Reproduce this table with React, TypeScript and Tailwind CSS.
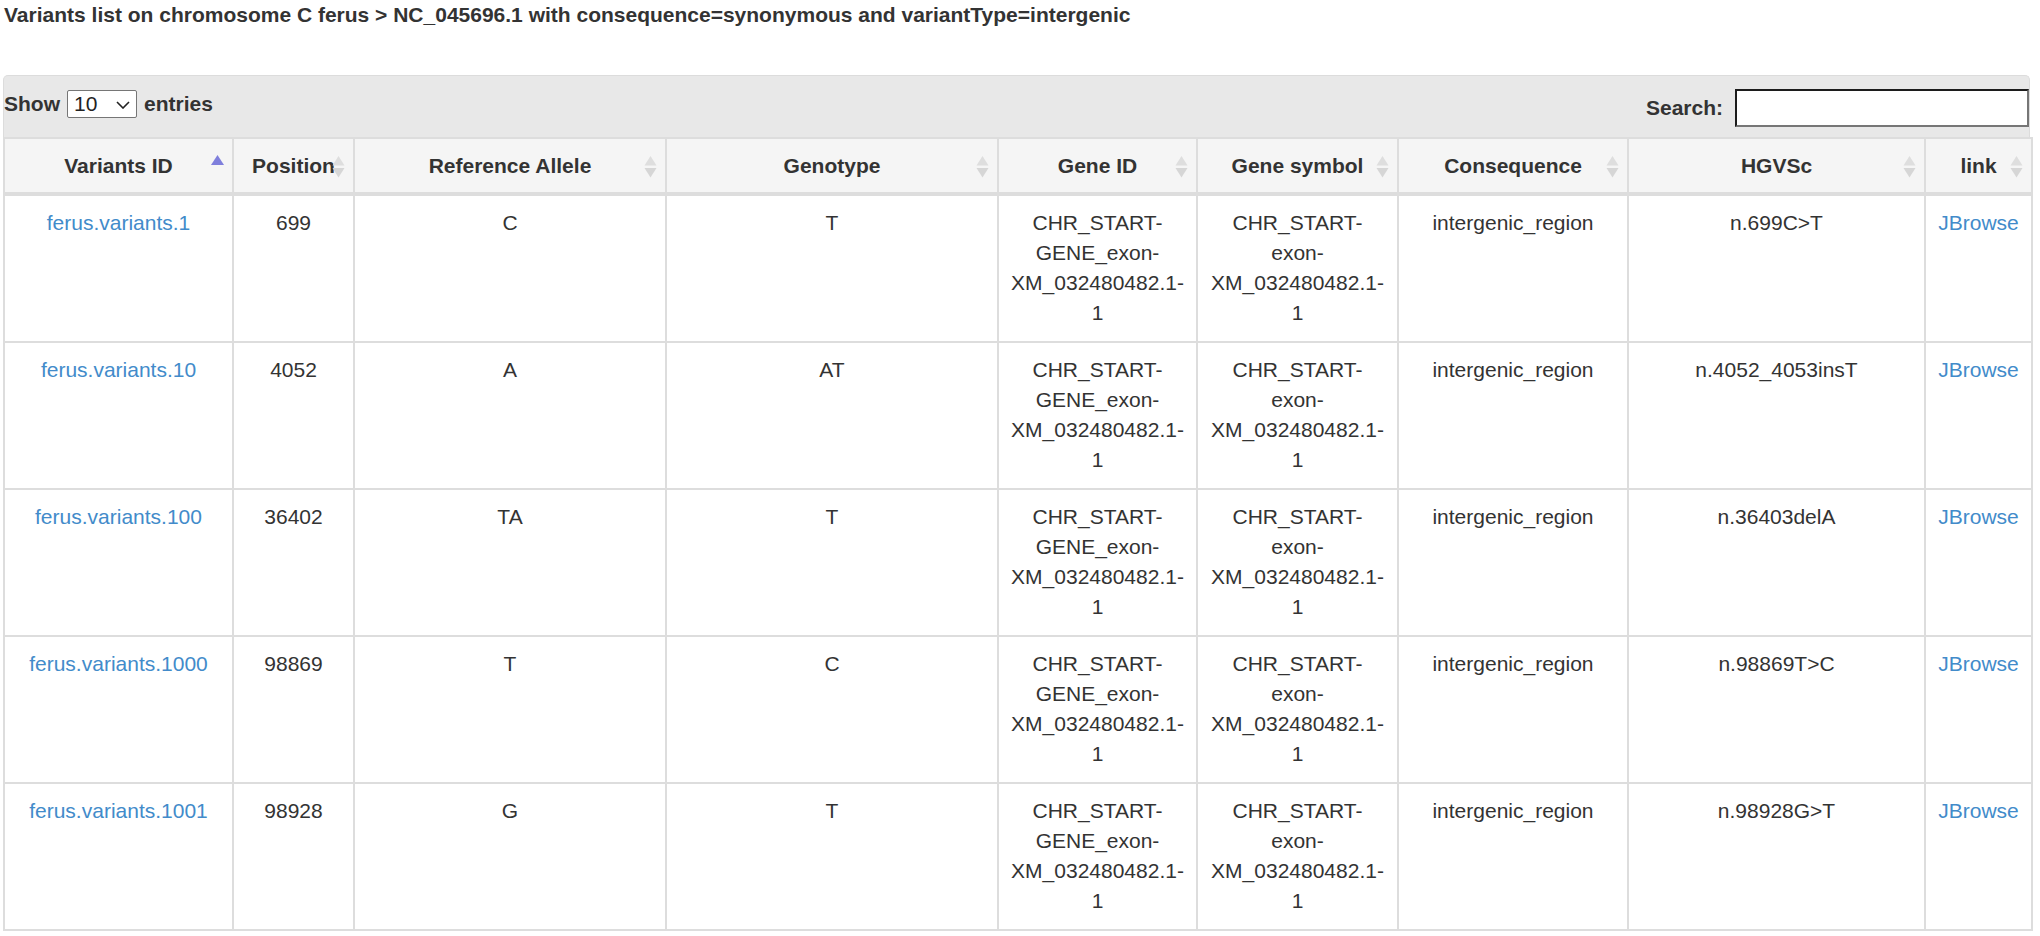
import { useState } from "react";

type Sort = "asc" | "both";

const columns: { label: string; sort: Sort }[] = [
  { label: "Variants ID", sort: "asc" },
  { label: "Position", sort: "both" },
  { label: "Reference Allele", sort: "both" },
  { label: "Genotype", sort: "both" },
  { label: "Gene ID", sort: "both" },
  { label: "Gene symbol", sort: "both" },
  { label: "Consequence", sort: "both" },
  { label: "HGVSc", sort: "both" },
  { label: "link", sort: "both" },
];

const GENE_ID = "CHR_START-GENE_exon-XM_032480482.1-1";
const GENE_SYMBOL = "CHR_START-exon-XM_032480482.1-1";

const rows = [
  { id: "ferus.variants.1", pos: "699", ref: "C", gt: "T", hgvs: "n.699C>T" },
  { id: "ferus.variants.10", pos: "4052", ref: "A", gt: "AT", hgvs: "n.4052_4053insT" },
  { id: "ferus.variants.100", pos: "36402", ref: "TA", gt: "T", hgvs: "n.36403delA" },
  { id: "ferus.variants.1000", pos: "98869", ref: "T", gt: "C", hgvs: "n.98869T>C" },
  { id: "ferus.variants.1001", pos: "98928", ref: "G", gt: "T", hgvs: "n.98928G>T" },
];

function SortIcon({ sort }: { sort: Sort }) {
  return (
    <svg
      width="13"
      height="24"
      viewBox="0 0 13 24"
      className="absolute right-[8px] top-[16px]"
    >
      {sort === "asc" ? (
        <path d="M6.5 0 L13 10 H0 Z" fill="#7f7fdc" />
      ) : (
        <>
          <path d="M6.5 1 L12.5 10.5 H0.5 Z" fill="#dedede" />
          <path d="M0.5 13 H12.5 L6.5 22.5 Z" fill="#d6d6d6" />
        </>
      )}
    </svg>
  );
}

const cell = "border-r-2 border-b-2 border-[#ddd] px-[10px] pt-[12px] pb-[13px] text-center";

export default function App() {
  const [search, setSearch] = useState("");

  return (
    <div className="min-h-screen bg-white px-[3px] font-['Liberation_Sans',Arial,sans-serif] text-[21px] leading-[30px] text-[#333]">
      <h1 className="mb-[45px] pl-[1px] font-bold">
        Variants list on chromosome C ferus &gt; NC_045696.1 with consequence=synonymous and
        variantType=intergenic
      </h1>

      {/* toolbar */}
      <div className="flex h-[62px] w-[2027px] items-start justify-between rounded-t-[5px] border border-b-0 border-[#dcdcdc] bg-[#e8e8e8] pt-[13px]">
        <label className="flex items-center font-bold">
          Show
          <span className="relative mx-[7px] flex h-[28px] w-[70px] items-center rounded-[2px] border border-[#767676] bg-white pl-[6px] font-normal text-[#222]">
            10
            <svg
              width="14"
              height="8"
              viewBox="0 0 14 8"
              className="absolute right-[6px] top-[10px]"
            >
              <path d="M1 1 L7 7 L13 1" fill="none" stroke="#222" strokeWidth="1.6" />
            </svg>
          </span>
          entries
        </label>
        <label className="flex items-center font-bold">
          Search:
          <input
            value={search}
            onChange={(e) => setSearch(e.target.value)}
            className="ml-[12px] h-[38px] w-[294px] border-2 border-t-[#1c1c1c] border-l-[#1c1c1c] border-r-[#767676] border-b-[#767676] bg-white px-[4px] font-normal outline-none"
          />
        </label>
      </div>

      {/* table */}
      <div className="grid w-fit grid-cols-[229px_121px_312px_332px_199px_201px_230px_297px_107px] border-l-2 border-[#ddd]">
        {columns.map((c) => (
          <div
            key={c.label}
            className="relative border-t-2 border-r-2 border-b-[4px] border-[#ddd] bg-[#f5f5f5] px-[10px] pt-[12px] pb-[11px] text-center font-bold whitespace-nowrap"
          >
            {c.label}
            <SortIcon sort={c.sort} />
          </div>
        ))}

        {rows.map((r) => (
          <div key={r.id} className="contents">
            <div className={cell}>
              <a href="#" className="text-[#428bca]">
                {r.id}
              </a>
            </div>
            <div className={cell}>{r.pos}</div>
            <div className={cell}>{r.ref}</div>
            <div className={cell}>{r.gt}</div>
            <div className={cell}>{GENE_ID}</div>
            <div className={cell}>{GENE_SYMBOL}</div>
            <div className={cell}>intergenic_region</div>
            <div className={cell}>{r.hgvs}</div>
            <div className={cell}>
              <a href="#" className="text-[#428bca]">
                JBrowse
              </a>
            </div>
          </div>
        ))}
      </div>
    </div>
  );
}
